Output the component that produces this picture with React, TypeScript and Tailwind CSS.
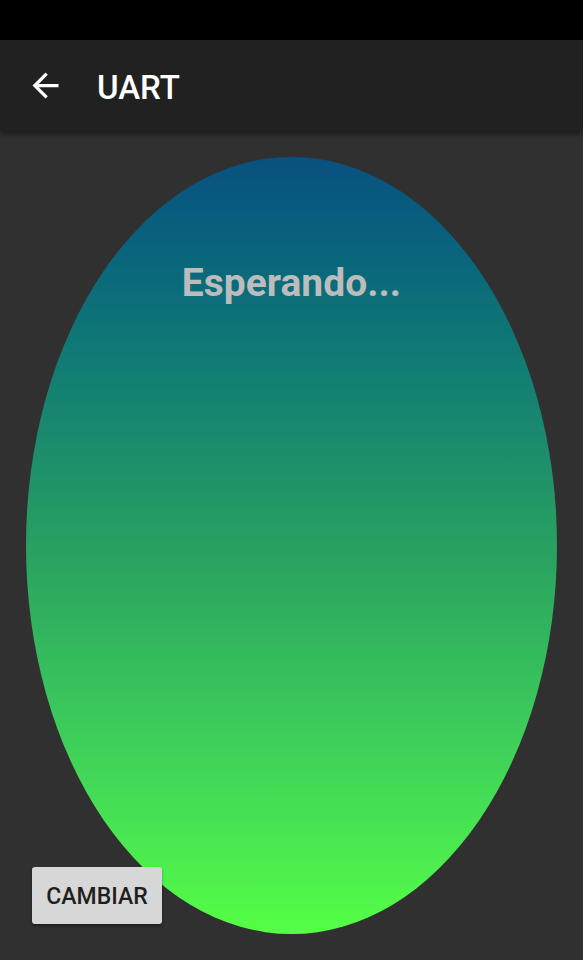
import React from "react";

export default function App() {
  return (
    <div className="flex h-screen w-full flex-col bg-[#303030]" style={{ fontFamily: "Roboto, 'Noto Sans', sans-serif" }}>
      <div className="h-[40px] w-full shrink-0 bg-black" />
      <div className="relative z-10 flex h-[91px] shrink-0 items-center bg-[#212121] shadow-[0_3px_6px_rgba(0,0,0,0.45)]">
        <svg className="ml-[26px] h-[39px] w-[39px]" viewBox="0 0 24 24" fill="#ffffff">
          <path d="M20 11H7.83l5.59-5.59L12 4l-8 8 8 8 1.41-1.41L7.83 13H20v-2z" />
        </svg>
        <span className="ml-[32px] pt-[3px] text-[33px] font-medium leading-none text-white">UART</span>
      </div>
      <div className="relative flex-1 p-[26px]">
        <div className="flex h-full w-full justify-center rounded-[50%] bg-gradient-to-b from-[#0a5080] via-[#28a060] to-[#55ff44]">
          <span className="pt-[107px] text-[39px] font-bold leading-none text-[#bcbcbc]">Esperando...</span>
        </div>
        <button className="absolute bottom-[36px] left-[32px] flex h-[57px] w-[130px] items-center justify-center rounded-[3px] bg-[#d7d7d7] pt-[3px] text-[23px] font-medium text-[#1f1f1f] shadow-[0_2px_3px_rgba(0,0,0,0.35)]">
          CAMBIAR
        </button>
      </div>
    </div>
  );
}
